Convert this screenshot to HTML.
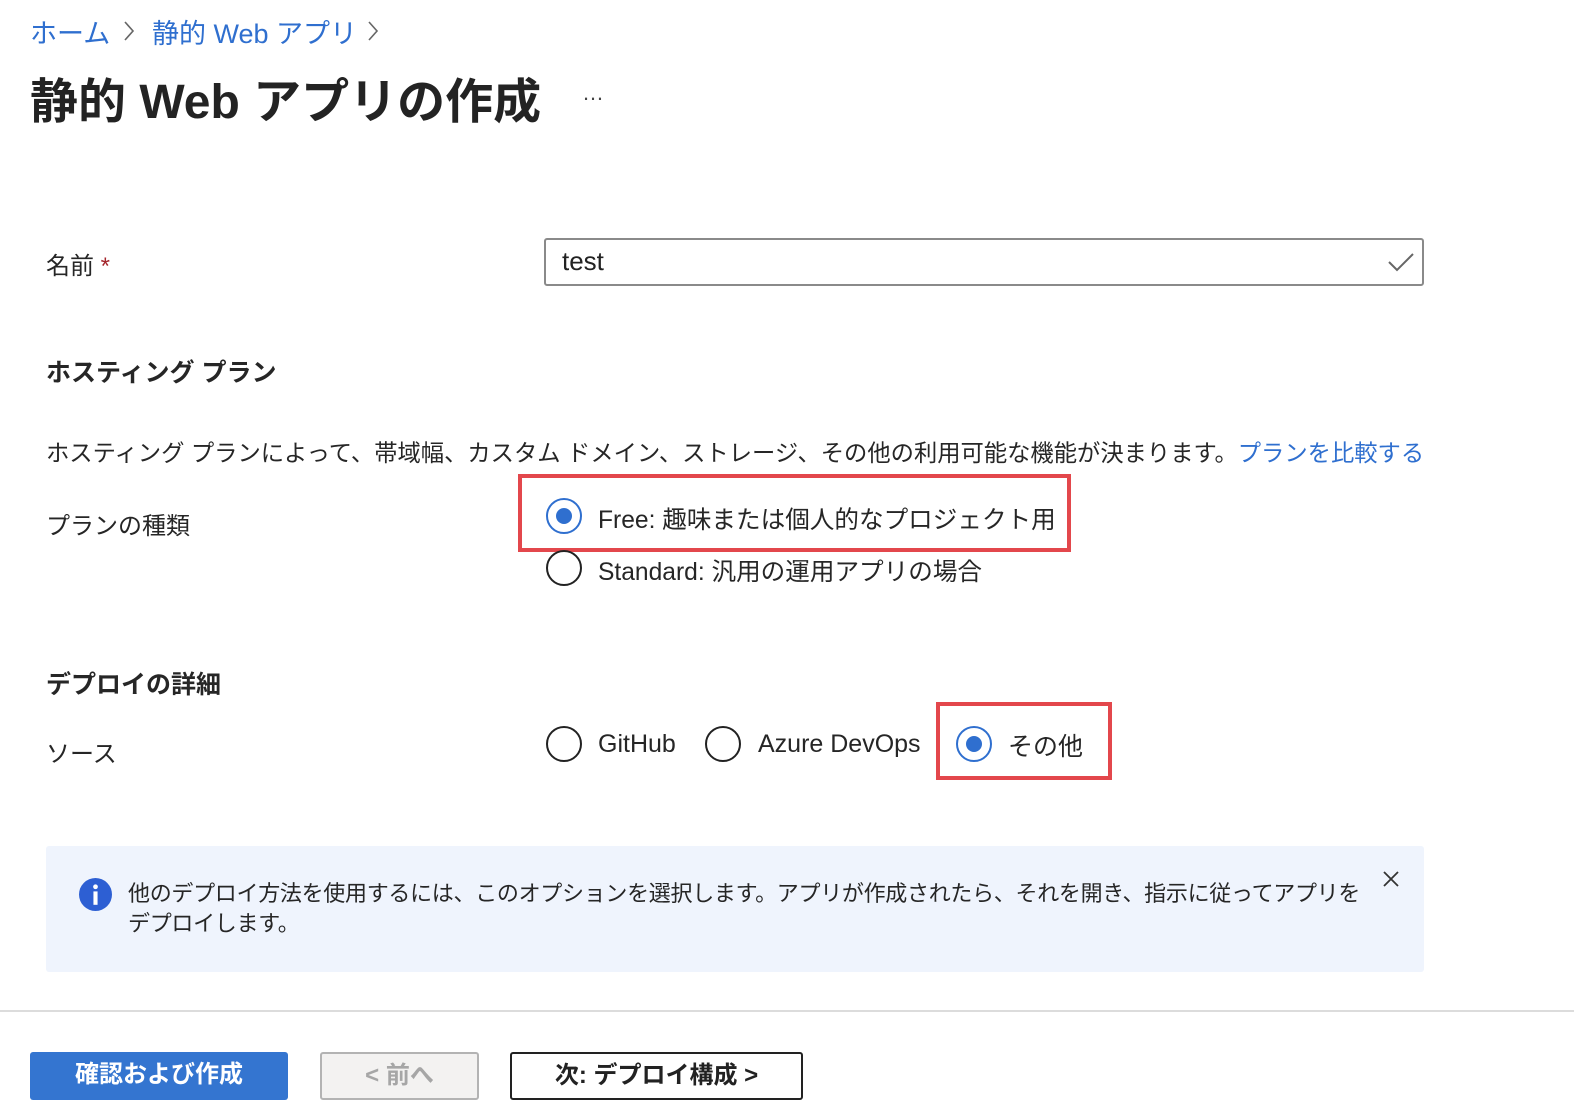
<!DOCTYPE html>
<html><head><meta charset="utf-8"><style>
*{margin:0;padding:0;box-sizing:border-box}
body{width:1574px;height:1118px;background:#fff;position:relative;overflow:hidden;font-family:"Liberation Sans","Noto Sans CJK JP",sans-serif;color:#222}
.a{position:absolute;white-space:nowrap}
.blue{color:#2f6fcf}
.h{font-weight:bold;font-size:25px;color:#262626}
.t{font-size:24px;color:#262626}
.radio{position:absolute;width:36px;height:36px;border:2px solid #222;border-radius:50%}
.radio.on{border-color:#2f6fcf}
.radio.on::after{content:"";position:absolute;left:8px;top:8px;width:16px;height:16px;border-radius:50%;background:#2f6fcf}
.red{position:absolute;border:4px solid #e3474c}
</style></head><body>
<div class="a blue" style="left:30px;top:12px;font-size:27px">ホーム</div>
<svg class="a" style="left:122px;top:20px" width="14" height="22" viewBox="0 0 14 22"><path d="M3 2L11 11L3 20" fill="none" stroke="#666" stroke-width="1.6"/></svg>
<div class="a blue" style="left:152px;top:12px;font-size:27px">静的 Web アプリ</div>
<svg class="a" style="left:366px;top:20px" width="14" height="22" viewBox="0 0 14 22"><path d="M3 2L11 11L3 20" fill="none" stroke="#666" stroke-width="1.6"/></svg>
<div class="a" style="left:30px;top:62px;font-size:48px;font-weight:bold;color:#232323">静的 Web アプリの作成</div>
<div class="a" style="left:582px;top:80px;font-size:22px;color:#444">…</div>

<div class="a t" style="left:46px;top:246px">名前 <span style="color:#a4262c">*</span></div>
<div class="a" style="left:544px;top:238px;width:880px;height:48px;border:2px solid #8a8a8a;border-radius:3px"></div>
<div class="a" style="left:562px;top:246px;font-size:26px;color:#222">test</div>
<svg class="a" style="left:1386px;top:250px" width="30" height="24" viewBox="0 0 30 24"><path d="M3 12 L11 20 L27 4" fill="none" stroke="#666" stroke-width="2"/></svg>

<div class="a h" style="left:46px;top:353px">ホスティング プラン</div>
<div class="a t" style="left:46px;top:434px;font-size:23.3px">ホスティング プランによって、帯域幅、カスタム ドメイン、ストレージ、その他の利用可能な機能が決まります。<span class="blue">プランを比較する</span></div>

<div class="a t" style="left:46px;top:506px">プランの種類</div>
<div class="red" style="left:518px;top:474px;width:553px;height:78px"></div>
<div class="radio on" style="left:546px;top:498px"></div>
<div class="a t" style="left:598px;top:500px;font-size:24.6px">Free: 趣味または個人的なプロジェクト用</div>
<div class="radio" style="left:546px;top:550px"></div>
<div class="a t" style="left:598px;top:552px;font-size:24.6px">Standard: 汎用の運用アプリの場合</div>

<div class="a h" style="left:46px;top:665px">デプロイの詳細</div>
<div class="a t" style="left:46px;top:734px">ソース</div>
<div class="radio" style="left:546px;top:726px"></div>
<div class="a t" style="left:598px;top:730px;font-size:25px">GitHub</div>
<div class="radio" style="left:705px;top:726px"></div>
<div class="a t" style="left:758px;top:730px;font-size:25px">Azure DevOps</div>
<div class="red" style="left:936px;top:702px;width:176px;height:78px"></div>
<div class="radio on" style="left:956px;top:726px"></div>
<div class="a t" style="left:1008px;top:727px;font-size:25px">その他</div>

<div class="a" style="left:46px;top:846px;width:1378px;height:126px;background:#eff4fd;border-radius:3px"></div>
<svg class="a" style="left:79px;top:878px" width="33" height="33" viewBox="0 0 32 32"><circle cx="16" cy="16" r="16" fill="#2d5fd3"/><circle cx="16" cy="8.5" r="2.3" fill="#fff"/><rect x="14" y="13" width="4" height="13" fill="#fff"/></svg>
<div class="a" style="left:128px;top:879px;font-size:22px;line-height:30px;color:#262626;white-space:normal;width:1240px;letter-spacing:-0.3px">他のデプロイ方法を使用するには、このオプションを選択します。アプリが作成されたら、それを開き、指示に従ってアプリをデプロイします。</div>
<svg class="a" style="left:1382px;top:870px" width="18" height="18" viewBox="0 0 18 18"><path d="M2 2L16 16M16 2L2 16" stroke="#333" stroke-width="1.8"/></svg>

<div class="a" style="left:0;top:1010px;width:1574px;height:2px;background:#dcdcdc"></div>
<div class="a" style="left:30px;top:1052px;width:258px;height:48px;background:#3475d0;border-radius:3px;color:#fff;font-weight:bold;font-size:24px;text-align:center;line-height:46px">確認および作成</div>
<div class="a" style="left:320px;top:1052px;width:159px;height:48px;background:#f3f2f1;border:2px solid #b3b3b3;border-radius:3px;color:#a6a6a6;font-weight:bold;font-size:24px;text-align:center;line-height:44px">&lt; 前へ</div>
<div class="a" style="left:510px;top:1052px;width:293px;height:48px;background:#fff;border:2px solid #222;border-radius:3px;color:#222;font-weight:bold;font-size:24px;text-align:center;line-height:44px">次: デプロイ構成 &gt;</div>
</body></html>
